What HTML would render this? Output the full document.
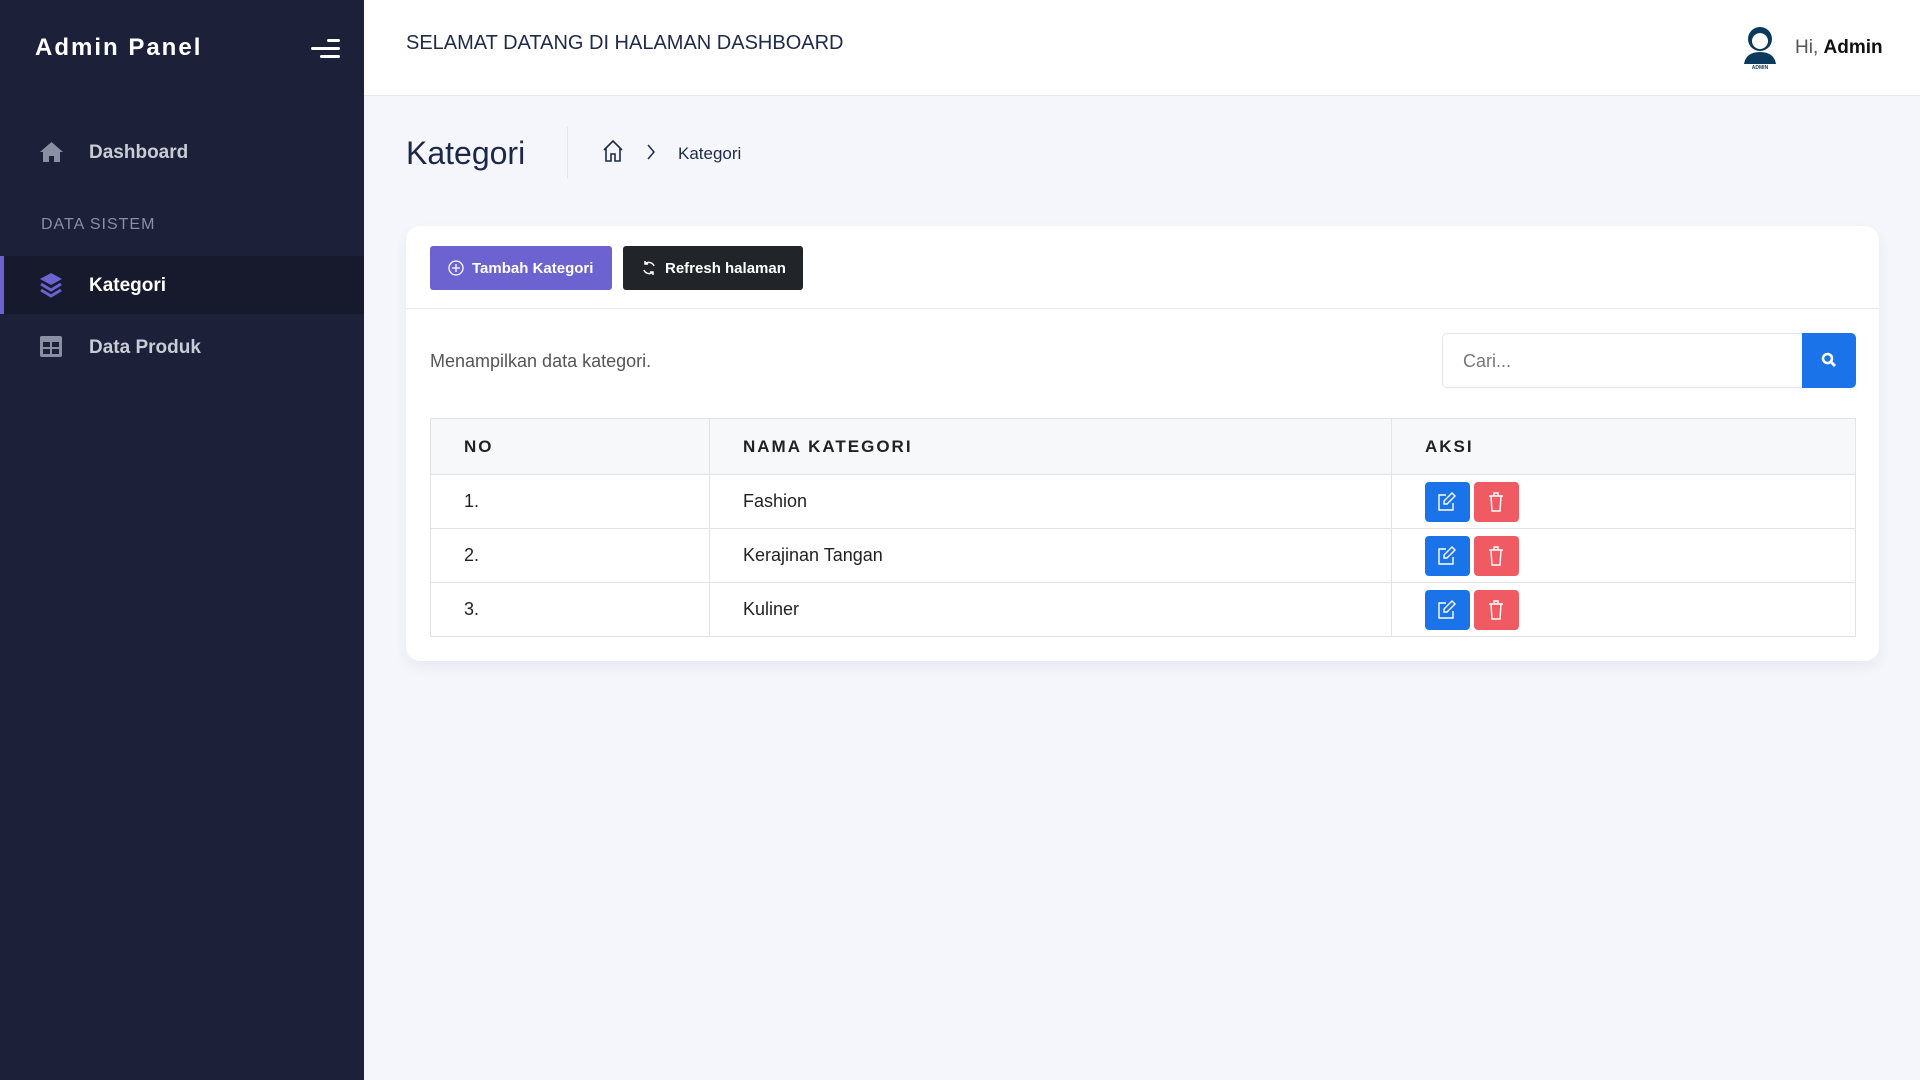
<!DOCTYPE html>
<html><head><meta charset="utf-8"><style>
*{box-sizing:border-box;margin:0;padding:0}
body{width:1920px;height:1080px;background:#f4f6fb;font-family:"Liberation Sans",sans-serif;position:relative;overflow:hidden;color:#1f2a4b}
.sb{position:absolute;left:0;top:0;width:364px;height:1080px;background:#1c2038}
.abs{position:absolute}
.logo{left:35px;top:34px;font-size:24px;font-weight:bold;color:#fff;letter-spacing:2px}
.ham span{position:absolute;height:3px;background:#fff;border-radius:2px}
.nav{font-size:19px;color:#c9ccd6;font-weight:bold}
.hdr{left:364px;top:0;width:1556px;height:96px;background:#fff;border-bottom:1px solid #e8eaef}
.card{left:406px;top:226px;width:1473px;height:435px;background:#fff;border-radius:14px;box-shadow:0 6px 14px rgba(30,40,80,.06)}
.btn{height:44px;border-radius:3px;color:#fff;font-size:15px;font-weight:bold;display:flex;align-items:center;gap:8px;padding-left:18px}
table{position:absolute;left:430px;top:418px;width:1426px;border-collapse:collapse;font-size:18px;color:#222}
td,th{border:1px solid #e2e3e6;height:54px;text-align:left;padding-left:33px;font-weight:normal}
th{background:#f7f8fa;height:56px;letter-spacing:2px;font-size:17px;font-weight:bold;color:#222}
.ab{display:inline-block;width:45px;height:40px;border-radius:4px;vertical-align:middle;position:relative}
.ab svg{position:absolute;left:12px;top:10px}
</style></head><body>
<div class="sb"></div>
<div class="abs logo">Admin Panel</div>
<div class="abs ham" style="left:311px;top:39px;width:30px;height:20px">
<span style="left:16px;top:0;width:13px"></span><span style="left:0;top:8px;width:29px"></span><span style="left:9px;top:16px;width:20px"></span></div>
<svg class="abs" style="left:39px;top:141px" width="25" height="22" viewBox="0 0 25 22"><path d="M12.5 1L1 11h3v10h6v-6h5v6h6V11h3z" fill="#8a8fa3"/></svg>
<div class="abs nav" style="left:89px;top:142px">Dashboard</div>
<div class="abs" style="left:41px;top:216px;font-size:16px;color:#8a8fa3;letter-spacing:1px">DATA SISTEM</div>
<div class="abs" style="left:0;top:256px;width:364px;height:58px;background:#161a2c;border-left:4px solid #6c63d0"></div>
<svg class="abs" style="left:39px;top:272px" width="24" height="26" viewBox="0 0 24 26"><path d="M12 1L1 7l11 6 11-6z" fill="#6c63d0"/><path d="M2 12l10 6 10-6M2 18l10 6 10-6" stroke="#6c63d0" stroke-width="3" fill="none"/></svg>
<div class="abs nav" style="left:89px;top:275px;color:#fff">Kategori</div>
<svg class="abs" style="left:40px;top:336px" width="22" height="21" viewBox="0 0 22 21"><rect x="0" y="0" width="22" height="21" rx="2" fill="#8a8fa3"/><rect x="3" y="6" width="7" height="5" fill="#1c2038"/><rect x="12" y="6" width="7" height="5" fill="#1c2038"/><rect x="3" y="13" width="7" height="5" fill="#1c2038"/><rect x="12" y="13" width="7" height="5" fill="#1c2038"/></svg>
<div class="abs nav" style="left:89px;top:337px">Data Produk</div>

<div class="abs hdr"></div>
<div class="abs" style="left:406px;top:32px;font-size:20px;color:#1f2a4b">SELAMAT DATANG DI HALAMAN DASHBOARD</div>
<svg class="abs" style="left:1742px;top:26px" width="36" height="44" viewBox="0 0 36 44"><circle cx="18" cy="13" r="12" fill="#0b3a5c"/><circle cx="18" cy="15" r="8" fill="#fff"/><path d="M10 11q8-8 16 0v-4q-8-6-16 0z" fill="#0b3a5c"/><path d="M2 38q2-12 16-12t16 12z" fill="#0b3a5c"/><text x="18" y="43" font-size="5" font-weight="bold" text-anchor="middle" fill="#0b3a5c" font-family="Liberation Sans">ADMIN</text></svg>
<div class="abs" style="left:1795px;top:37px;font-size:19px;color:#555">Hi, <b style="color:#111">Admin</b></div>

<div class="abs" style="left:406px;top:135px;font-size:32px;color:#1d2748">Kategori</div>
<div class="abs" style="left:567px;top:127px;width:1px;height:51px;background:#e3e5ea"></div>
<svg class="abs" style="left:601px;top:139px" width="24" height="24" viewBox="0 0 24 24" fill="none" stroke="#1f2a4b" stroke-width="1.6"><path d="M3 11L12 2l9 9M5 9v13h5v-7h4v7h5V9"/></svg>
<svg class="abs" style="left:646px;top:143px" width="10" height="18" viewBox="0 0 10 18" fill="none" stroke="#1f2a4b" stroke-width="1.5"><path d="M2 2l6 7-6 7"/></svg>
<div class="abs" style="left:678px;top:144px;font-size:17px;color:#1f2a4b">Kategori</div>

<div class="abs card"></div>
<div class="abs btn" style="left:430px;top:246px;width:182px;background:#6c63d0"><svg width="16" height="16" viewBox="0 0 16 16" fill="none" stroke="#fff" stroke-width="1.3"><circle cx="8" cy="8" r="7"/><path d="M8 4v8M4 8h8"/></svg>Tambah Kategori</div>
<div class="abs btn" style="left:623px;top:246px;width:180px;background:#212529"><svg width="16" height="16" viewBox="0 0 16 16" fill="none" stroke="#fff" stroke-width="1.5"><path d="M13 6A5.5 5.5 0 0 0 4 4M3 10a5.5 5.5 0 0 0 9 2"/><path d="M4 1v3h3M12 15v-3H9"/></svg>Refresh halaman</div>
<div class="abs" style="left:406px;top:308px;width:1473px;height:1px;background:#e8eaef"></div>
<div class="abs" style="left:430px;top:351px;font-size:18px;color:#555">Menampilkan data kategori.</div>
<div class="abs" style="left:1442px;top:333px;width:362px;height:55px;border:1px solid #e3e5ea;border-radius:5px 0 0 5px;background:#fff;font-size:18px;color:#777;padding:17px 0 0 20px">Cari...</div>
<div class="abs" style="left:1802px;top:333px;width:54px;height:55px;background:#1a73e8;border-radius:0 5px 5px 0"><svg style="position:absolute;left:19px;top:19px" width="16" height="16" viewBox="0 0 16 16"><circle cx="6.5" cy="6.5" r="4.5" fill="none" stroke="#fff" stroke-width="2.5"/><path d="M10 10l4 4" stroke="#fff" stroke-width="3"/></svg></div>

<table>
<tr><th style="width:279px">NO</th><th style="width:682px">NAMA KATEGORI</th><th>AKSI</th></tr>
<tr><td>1.</td><td>Fashion</td><td></td></tr>
<tr><td>2.</td><td>Kerajinan Tangan</td><td></td></tr>
<tr><td>3.</td><td>Kuliner</td><td></td></tr>
</table>
<div class="abs" style="left:1425px;top:482px;line-height:0">
<div><span class="ab" style="background:#1a73e8"><svg width="20" height="20" viewBox="0 0 20 20" fill="none" stroke="#fff" stroke-width="1.4"><path d="M9 3H2v15h14v-7"/><path d="M15 1l3 3-8 8H7V9z"/></svg></span> <span class="ab" style="background:#f05a62"><svg width="20" height="20" viewBox="0 0 20 20" fill="none" stroke="#fff" stroke-width="1.4"><path d="M3 4h14M8 4V1h4v3M5 4l1 15h8l1-15"/></svg></span></div>
<div style="margin-top:14px"><span class="ab" style="background:#1a73e8"><svg width="20" height="20" viewBox="0 0 20 20" fill="none" stroke="#fff" stroke-width="1.4"><path d="M9 3H2v15h14v-7"/><path d="M15 1l3 3-8 8H7V9z"/></svg></span> <span class="ab" style="background:#f05a62"><svg width="20" height="20" viewBox="0 0 20 20" fill="none" stroke="#fff" stroke-width="1.4"><path d="M3 4h14M8 4V1h4v3M5 4l1 15h8l1-15"/></svg></span></div>
<div style="margin-top:14px"><span class="ab" style="background:#1a73e8"><svg width="20" height="20" viewBox="0 0 20 20" fill="none" stroke="#fff" stroke-width="1.4"><path d="M9 3H2v15h14v-7"/><path d="M15 1l3 3-8 8H7V9z"/></svg></span> <span class="ab" style="background:#f05a62"><svg width="20" height="20" viewBox="0 0 20 20" fill="none" stroke="#fff" stroke-width="1.4"><path d="M3 4h14M8 4V1h4v3M5 4l1 15h8l1-15"/></svg></span></div>
</div>
</body></html>
